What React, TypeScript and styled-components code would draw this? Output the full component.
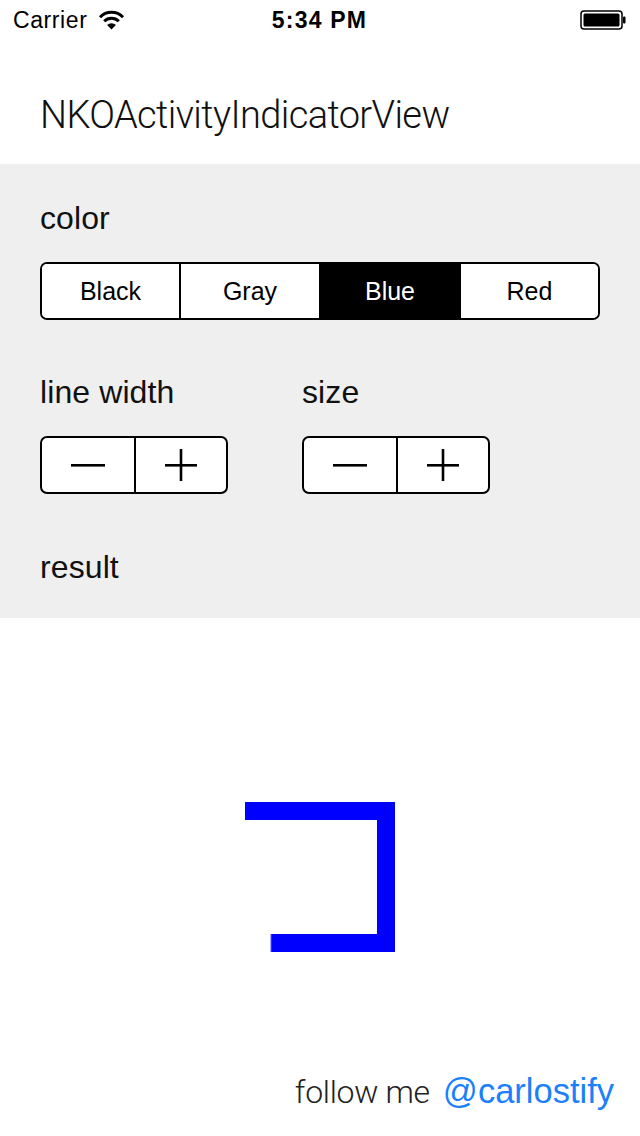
import React from "react";
import styled, { createGlobalStyle } from "styled-components";

const GlobalStyle = createGlobalStyle`
  html, body {
    margin: 0;
    padding: 0;
    background: #ffffff;
  }
  body {
    font-family: "Liberation Sans", Arial, sans-serif;
    color: #000;
  }
  * { box-sizing: border-box; }
`;

const Screen = styled.div`
  width: 640px;
  height: 1136px;
  display: flex;
  flex-direction: column;
  background: #ffffff;
  overflow: hidden;
`;

const StatusBar = styled.div`
  height: 40px;
  display: grid;
  grid-template-columns: 1fr auto 1fr;
  align-items: center;
  padding: 0 14px 0 13px;
  font-size: 23px;
`;

const StatusLeft = styled.div`
  display: flex;
  align-items: center;
  gap: 11px;
  letter-spacing: 0.6px;
`;

const StatusTime = styled.div`
  font-weight: bold;
  font-size: 23px;
  letter-spacing: 1.2px;
`;

const StatusRight = styled.div`
  display: flex;
  justify-content: flex-end;
  align-items: center;
`;

const Header = styled.div`
  height: 124px;
  padding: 52px 0 0 40px;
`;

const Title = styled.h1`
  margin: 0;
  font-family: Roboto, "Liberation Sans", sans-serif;
  font-weight: 300;
  font-size: 38px;
  letter-spacing: -0.6px;
  line-height: 46px;
  color: #111;
`;

const Panel = styled.section`
  height: 454px;
  background: #efefef;
  padding: 36px 40px 0 40px;
  display: flex;
  flex-direction: column;
`;

const Label = styled.div`
  font-family: "Liberation Sans", Arial, sans-serif;
  font-size: 32px;
  letter-spacing: 0.1px;
  line-height: 36px;
  color: #111;
`;

const Segmented = styled.div`
  margin-top: 26px;
  height: 58px;
  width: 560px;
  display: grid;
  grid-template-columns: 137px 140px 140px 139px;
  border: 2px solid #000;
  border-radius: 7px;
  overflow: hidden;
  background: #fff;
`;

const Segment = styled.div<{ $active?: boolean; $first?: boolean }>`
  display: flex;
  align-items: center;
  justify-content: center;
  font-size: 25px;
  background: ${(p) => (p.$active ? "#000" : "#fff")};
  color: ${(p) => (p.$active ? "#fff" : "#000")};
  border-left: ${(p) => (p.$first ? "none" : "2px solid #000")};
`;

const ControlsRow = styled.div`
  margin-top: 54px;
  display: grid;
  grid-template-columns: 262px 1fr;
`;

const ControlColumn = styled.div`
  display: flex;
  flex-direction: column;
`;

const Stepper = styled.div`
  margin-top: 26px;
  width: 188px;
  height: 58px;
  display: grid;
  grid-template-columns: 92px 92px;
  border: 2px solid #000;
  border-radius: 7px;
  background: #fff;
  overflow: hidden;
`;

const StepButton = styled.div<{ $first?: boolean }>`
  display: flex;
  align-items: center;
  justify-content: center;
  border-left: ${(p) => (p.$first ? "none" : "2px solid #000")};
`;

const ResultLabel = styled(Label)`
  margin-top: 55px;
`;

const Stage = styled.div`
  flex: 1;
  display: flex;
  flex-direction: column;
  align-items: center;
  padding-top: 184px;
`;

const Spacer = styled.div`
  flex: 1;
`;

const Footer = styled.div`
  align-self: stretch;
  display: flex;
  justify-content: flex-end;
  align-items: baseline;
  gap: 13px;
  padding: 0 26px 25px 0;
`;

const FollowText = styled.span`
  font-family: Roboto, "Liberation Sans", sans-serif;
  font-weight: 300;
  font-size: 32px;
  letter-spacing: -0.3px;
  color: #222;
`;

const Handle = styled.span`
  font-family: "Liberation Sans", Arial, sans-serif;
  font-size: 34.5px;
  color: #1a80fb;
`;

const Wifi = () => (
  <svg width="27" height="20" viewBox="0 0 26 20">
    <path d="M1.5 7.2 A16 16 0 0 1 24.5 7.2" fill="none" stroke="#000" strokeWidth="3" />
    <path d="M5.7 11.2 A10.3 10.3 0 0 1 20.3 11.2" fill="none" stroke="#000" strokeWidth="3" />
    <path d="M13 19.5 L8.6 15 A6.2 6.2 0 0 1 17.4 15 Z" fill="#000" />
  </svg>
);

const Battery = () => (
  <svg width="46" height="20" viewBox="0 0 46 20">
    <rect x="1" y="1" width="41" height="18" rx="3" fill="none" stroke="#000" strokeWidth="1.5" />
    <rect x="3.5" y="3.5" width="36" height="13" rx="1.5" fill="#000" />
    <rect x="43" y="6.5" width="2.5" height="7" rx="1" fill="#000" />
  </svg>
);

const Minus = () => (
  <svg width="34" height="34" viewBox="0 0 34 34">
    <rect x="0" y="16" width="34" height="2.6" fill="#000" />
  </svg>
);

const Plus = () => (
  <svg width="32" height="32" viewBox="0 0 32 32">
    <rect x="0" y="15" width="32" height="2.6" fill="#000" />
    <rect x="14.7" y="0" width="2.6" height="32" fill="#000" />
  </svg>
);

const Indicator = () => (
  <svg width="150" height="150" viewBox="0 0 150 150">
    <rect x="0" y="0" width="150" height="18" fill="#0000ff" />
    <rect x="132" y="0" width="18" height="150" fill="#0000ff" />
    <rect x="26" y="132" width="124" height="18" fill="#0000ff" />
    <rect x="25.5" y="132" width="1" height="18" fill="#5a5aff" />
  </svg>
);

const colors = ["Black", "Gray", "Blue", "Red"];

const StepperControl = () => (
  <Stepper>
    <StepButton $first>
      <Minus />
    </StepButton>
    <StepButton>
      <Plus />
    </StepButton>
  </Stepper>
);

export default function App() {
  return (
    <>
      <GlobalStyle />
      <Screen>
        <StatusBar>
          <StatusLeft>
            <span>Carrier</span>
            <Wifi />
          </StatusLeft>
          <StatusTime>5:34 PM</StatusTime>
          <StatusRight>
            <Battery />
          </StatusRight>
        </StatusBar>
        <Header>
          <Title>NKOActivityIndicatorView</Title>
        </Header>
        <Panel>
          <Label>color</Label>
          <Segmented>
            {colors.map((c, i) => (
              <Segment key={c} $first={i === 0} $active={c === "Blue"}>
                {c}
              </Segment>
            ))}
          </Segmented>
          <ControlsRow>
            <ControlColumn>
              <Label>line width</Label>
              <StepperControl />
            </ControlColumn>
            <ControlColumn>
              <Label>size</Label>
              <StepperControl />
            </ControlColumn>
          </ControlsRow>
          <ResultLabel>result</ResultLabel>
        </Panel>
        <Stage>
          <Indicator />
          <Spacer />
          <Footer>
            <FollowText>follow me</FollowText>
            <Handle>@carlostify</Handle>
          </Footer>
        </Stage>
      </Screen>
    </>
  );
}
